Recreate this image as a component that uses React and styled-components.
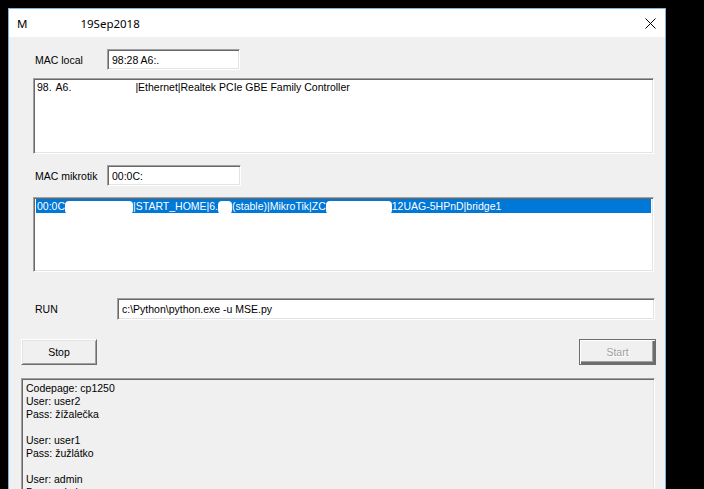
import React from 'react'
import styled, { createGlobalStyle } from 'styled-components'

const GlobalStyle = createGlobalStyle`
    html, body {
        margin: 0;
        padding: 0;
        background: #000;
        overflow: hidden;
    }
`

const Window = styled.div`
    box-sizing: border-box;
    margin: 8px 0 0 8px;
    width: 658px;
    height: 481px;
    display: flex;
    flex-direction: column;
    background: #f0f0f0;
    border: 1px solid #7fb2e0;
    border-bottom: none;
    font-family: "Liberation Sans", Arial, sans-serif;
    font-size: 10.5px;
    color: #000;
    overflow: hidden;
`

const TitleBar = styled.div`
    height: 28px;
    flex: none;
    display: flex;
    align-items: center;
    justify-content: space-between;
    background: #fff;
    padding-left: 8px;
    font-family: "Noto Sans", "Liberation Sans", sans-serif;
    font-size: 11.5px;
`

const Title = styled.div`
    display: flex;
    align-items: center;
`

const Gap = styled.span`
    display: inline-block;
    width: ${p => p.w}px;
`

const Close = styled.div`
    width: 30px;
    height: 28px;
    display: flex;
    align-items: center;
    justify-content: center;
`

const Body = styled.div`
    flex: 1;
    display: flex;
    flex-direction: column;
    padding: 12px 10px 0 12px;
    min-height: 0;
`

const Section = styled.div`
    margin-left: 12px;
    margin-right: 1px;
    display: flex;
    flex-direction: column;
`

const Row = styled.div`
    display: flex;
    align-items: center;
    margin-top: ${p => p.top || 0}px;
`

const Label = styled.div`
    width: ${p => p.w}px;
    padding-left: ${p => p.pad || 2}px;
    box-sizing: border-box;
    flex: none;
`

const sunken = `
    box-sizing: border-box;
    border-top: 1px solid #a0a0a0;
    border-left: 1px solid #a0a0a0;
    border-right: 1px solid #fff;
    border-bottom: 1px solid #fff;
    box-shadow: inset 1px 1px 0 #696969, inset -1px -1px 0 #e3e3e3;
`

const TextBox = styled.div`
    ${sunken}
    height: ${p => p.h || 21}px;
    width: ${p => (p.w ? p.w + 'px' : 'auto')};
    flex: ${p => (p.w ? 'none' : '1')};
    background: #fff;
    display: flex;
    align-items: center;
    padding-left: 4px;
    white-space: pre;
`

const ListBox = styled.div`
    ${sunken}
    height: ${p => p.h}px;
    margin-top: ${p => p.top}px;
    background: #fff;
    padding: 1px 2px 0 2px;
`

const Item = styled.div`
    height: 14px;
    line-height: 14px;
    padding-left: 1px;
    white-space: pre;
    background: ${p => (p.selected ? '#0078d7' : 'transparent')};
    color: ${p => (p.selected ? '#fff' : '#000')};
`

const Redact = styled.span`
    display: inline-block;
    width: ${p => p.w}px;
    height: 13px;
    vertical-align: middle;
    background: #fff;
    border-radius: 4px;
`

const Buttons = styled.div`
    display: flex;
    justify-content: space-between;
    margin-top: 19px;
    margin-right: -1px;
`

const Button = styled.div`
    box-sizing: border-box;
    width: ${p => p.w}px;
    height: 26px;
    display: flex;
    align-items: center;
    justify-content: center;
    background: #f0f0f0;
    color: ${p => (p.disabled ? '#a0a0a0' : '#000')};
    text-shadow: ${p => (p.disabled ? '1px 1px 0 #fff' : 'none')};
    border-top: 1px solid ${p => (p.disabled ? '#6d6d6d' : '#fff')};
    border-left: 1px solid ${p => (p.disabled ? '#6d6d6d' : '#fff')};
    border-right: 1px solid #6d6d6d;
    border-bottom: 1px solid #6d6d6d;
    box-shadow: ${p =>
        p.disabled
            ? 'inset 1px 1px 0 #fff, inset -2px -2px 0 #6d6d6d, inset -3px -3px 0 #a0a0a0'
            : 'inset 1px 1px 0 #e3e3e3, inset -1px -1px 0 #a0a0a0'};
`

const Output = styled.div`
    ${sunken}
    flex: 1;
    margin-top: 13px;
    background: #f0f0f0;
    padding: 3px 4px;
    line-height: 13px;
    white-space: pre;
`

const logLines = [
    'Codepage: cp1250',
    'User: user2',
    'Pass: žížalečka',
    '',
    'User: user1',
    'Pass: žužlátko',
    '',
    'User: admin',
    'Pass: admin',
]

function CloseIcon() {
    return (
        <svg width="11" height="11" viewBox="0 0 11 11">
            <path d="M0.5 0.5 L10.5 10.5 M10.5 0.5 L0.5 10.5" stroke="#000" strokeWidth="1" fill="none" />
        </svg>
    )
}

export default function App() {
    return (
        <React.Fragment>
            <GlobalStyle />
            <Window>
                <TitleBar>
                    <Title>
                        M<Gap w={53} />19Sep2018
                    </Title>
                    <Close>
                        <CloseIcon />
                    </Close>
                </TitleBar>
                <Body>
                    <Section>
                        <Row>
                            <Label w={74}>MAC local</Label>
                            <TextBox w={133}>98:28 A6:.</TextBox>
                        </Row>
                        <ListBox h={76} top={8}>
                            <Item>
                                98.<Redact w={4} />A6.<Redact w={64} />|Ethernet|Realtek PCIe GBE Family Controller
                            </Item>
                        </ListBox>
                        <Row top={11}>
                            <Label w={74}>MAC mikrotik</Label>
                            <TextBox w={134}>00:0C:</TextBox>
                        </Row>
                        <ListBox h={75} top={11}>
                            <Item selected>
                                00:0C<Redact w={68} />|START_HOME|6.<Redact w={14} />(stable)|MikroTik|ZC<Redact w={66} />12UAG-5HPnD|bridge1
                            </Item>
                        </ListBox>
                    </Section>
                    <Row top={26}>
                        <Label w={96} pad={14}>RUN</Label>
                        <TextBox h={22}>c:\Python\python.exe -u MSE.py</TextBox>
                    </Row>
                    <Buttons>
                        <Button w={76}>Stop</Button>
                        <Button w={77} disabled>Start</Button>
                    </Buttons>
                    <Output>
                        {logLines.map((line, i) => (
                            <div key={i}>{line || ' '}</div>
                        ))}
                    </Output>
                </Body>
            </Window>
        </React.Fragment>
    )
}
